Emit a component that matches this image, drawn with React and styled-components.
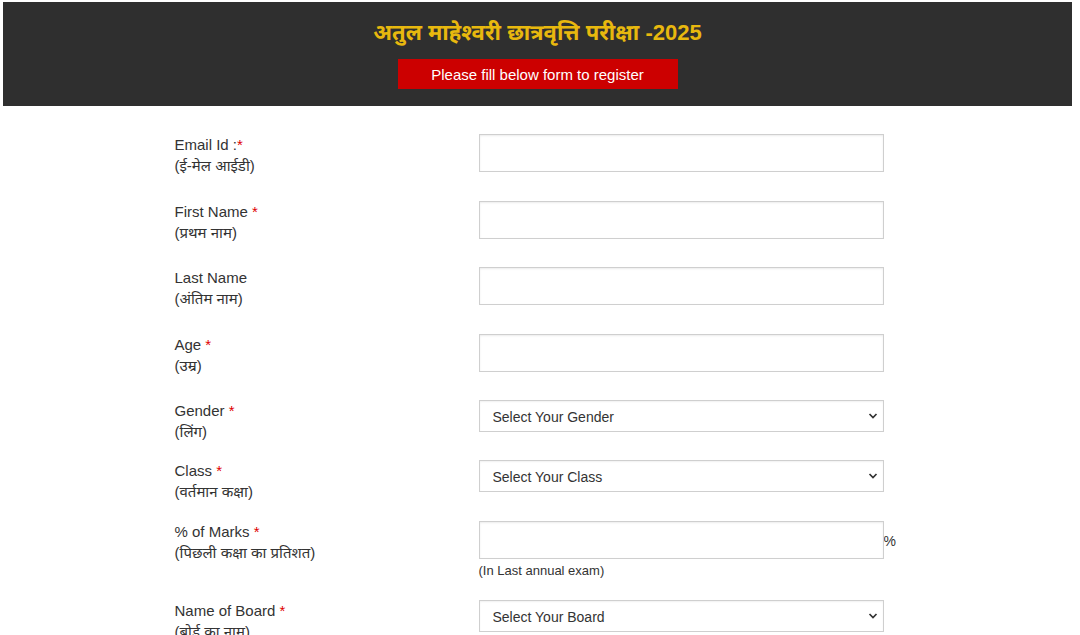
import React from 'react';
import styled, { createGlobalStyle } from 'styled-components';

const GlobalStyle = createGlobalStyle`
  body {
    margin: 0;
    background: #fff;
    font-family: "Liberation Sans", Arial, "Noto Sans", sans-serif;
    color: #333;
  }
`;

const Page = styled.div`
  padding: 2px 8px 0 3px;
`;

const Header = styled.header`
  background-color: #2f2f2f;
  padding: 14px 0 17px;
  text-align: center;
`;

const Title = styled.h1`
  margin: 0;
  font-size: 22px;
  line-height: 34px;
  font-weight: bold;
  color: #e8b80e;
`;

const Banner = styled.div`
  width: 280px;
  height: 30px;
  margin: 9px auto 0;
  background-color: #cc0000;
  color: #fff;
  font-size: 15px;
  line-height: 31px;
`;

const Form = styled.form`
  width: 726px;
  margin: 28px auto 0;
  position: relative;
  left: -1px;
`;

const Row = styled.div`
  display: grid;
  grid-template-columns: 305px 405px 16px;
  align-items: start;
  height: ${(p) => p.$h}px;
`;

const Label = styled.div`
  padding-left: 1px;
  font-size: 15px;
  line-height: 21px;
  color: #333;
`;

const Star = styled.span`
  color: #e00000;
`;

const Field = styled.div`
  position: relative;
`;

const TextInput = styled.input`
  display: block;
  box-sizing: border-box;
  width: 100%;
  height: 38px;
  border: 1px solid #cfcfcf;
  border-radius: 0;
  box-shadow: inset 0 1px 2px rgba(0, 0, 0, 0.08);
  padding: 0 12px;
  font-size: 14px;
  background: #fff;
  outline: none;
`;

const Select = styled.select`
  display: block;
  box-sizing: border-box;
  width: 100%;
  height: 32px;
  border: 1px solid #cfcfcf;
  border-radius: 0;
  box-shadow: inset 0 1px 2px rgba(0, 0, 0, 0.06);
  padding: 1px 30px 0 13px;
  font-family: "Liberation Sans", Arial, sans-serif;
  font-size: 14px;
  color: #333;
  background: #fff;
  appearance: none;
  -webkit-appearance: none;
  outline: none;
`;

const Chevron = styled.svg`
  position: absolute;
  right: 6px;
  top: 12px;
  width: 10px;
  height: 8px;
  pointer-events: none;
`;

const Note = styled.div`
  margin-top: 4px;
  font-size: 13px;
  line-height: 15px;
  color: #333;
`;

const Suffix = styled.span`
  font-size: 14px;
  line-height: 16px;
  padding-top: 12px;
  color: #333;
`;

function Required() {
  return <Star>*</Star>;
}

function Dropdown({ placeholder }) {
  return (
    <Field>
      <Select defaultValue="">
        <option value="">{placeholder}</option>
      </Select>
      <Chevron viewBox="0 0 10 8">
        <path d="M1.5 2 L5 5.5 L8.5 2" fill="none" stroke="#333" strokeWidth="1.7" />
      </Chevron>
    </Field>
  );
}

export default function App() {
  return (
    <>
      <GlobalStyle />
      <Page>
        <Header>
          <Title>अतुल माहेश्वरी छात्रवृत्ति परीक्षा -2025</Title>
          <Banner>Please fill below form to register</Banner>
        </Header>

        <Form onSubmit={(e) => e.preventDefault()}>
          <Row $h={67}>
            <Label>
              Email Id :<Required />
              <br />
              (ई-मेल आईडी)
            </Label>
            <Field>
              <TextInput type="email" />
            </Field>
          </Row>

          <Row $h={66}>
            <Label>
              First Name <Required />
              <br />
              (प्रथम नाम)
            </Label>
            <Field>
              <TextInput type="text" />
            </Field>
          </Row>

          <Row $h={67}>
            <Label>
              Last Name
              <br />
              (अंतिम नाम)
            </Label>
            <Field>
              <TextInput type="text" />
            </Field>
          </Row>

          <Row $h={66}>
            <Label>
              Age <Required />
              <br />
              (उम्र)
            </Label>
            <Field>
              <TextInput type="text" />
            </Field>
          </Row>

          <Row $h={60}>
            <Label>
              Gender <Required />
              <br />
              (लिंग)
            </Label>
            <Dropdown placeholder="Select Your Gender" />
          </Row>

          <Row $h={61}>
            <Label>
              Class <Required />
              <br />
              (वर्तमान कक्षा)
            </Label>
            <Dropdown placeholder="Select Your Class" />
          </Row>

          <Row $h={79}>
            <Label>
              % of Marks <Required />
              <br />
              (पिछली कक्षा का प्रतिशत)
            </Label>
            <Field>
              <TextInput type="text" />
              <Note>(In Last annual exam)</Note>
            </Field>
            <Suffix>%</Suffix>
          </Row>

          <Row $h={60}>
            <Label>
              Name of Board <Required />
              <br />
              (बोर्ड का नाम)
            </Label>
            <Dropdown placeholder="Select Your Board" />
          </Row>
        </Form>
      </Page>
    </>
  );
}
